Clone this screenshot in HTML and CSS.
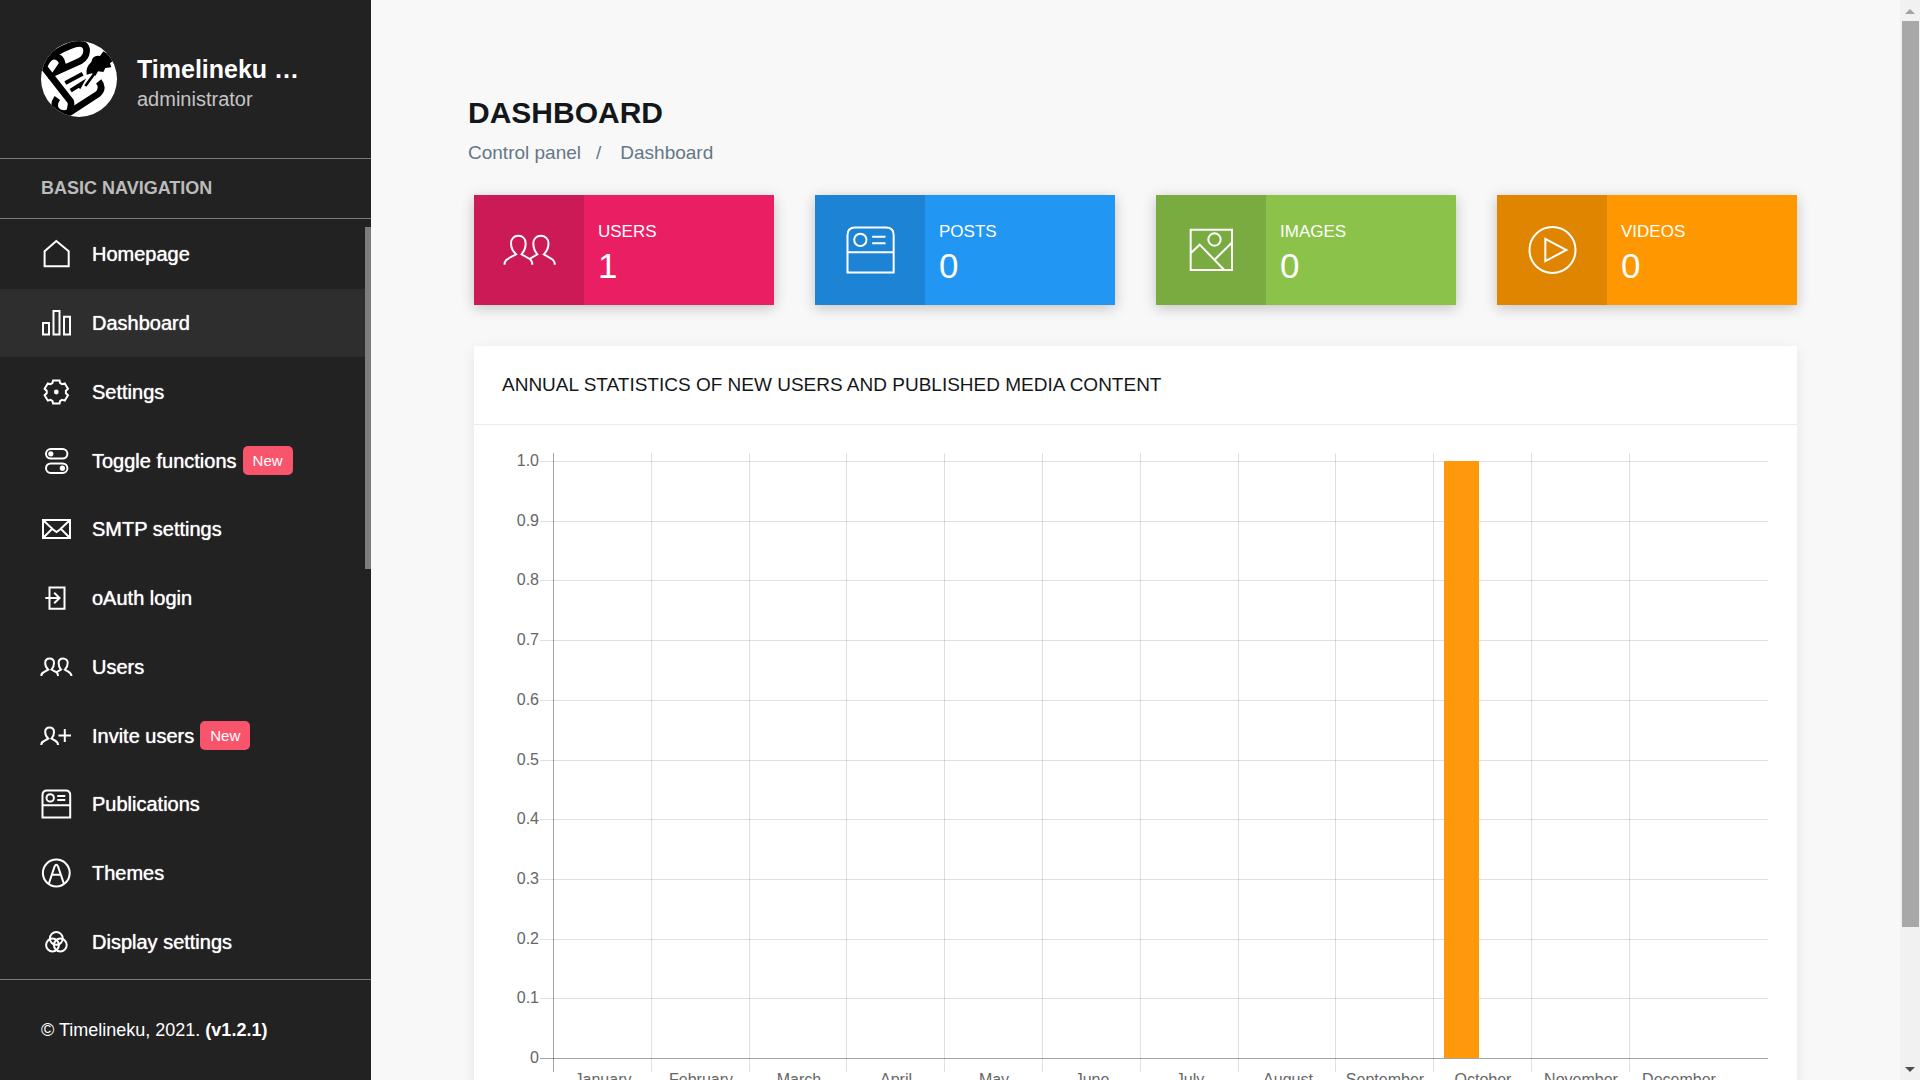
FILE: index.html
```
<!DOCTYPE html>
<html lang="en">
<head>
    <meta charset="UTF-8">
    <meta name="viewport" content="width=device-width, initial-scale=1.0">
    <title>Dashboard</title>
    <link rel="stylesheet" href="styles.css">
</head>
<body>
    <!-- Icon set -->
    <svg class="sprite" aria-hidden="true">
        <symbol id="home" viewBox="0 0 30 30"><path d="M3.6 12.3L15.3 2L27.7 12.3V27.3H3.6Z"/></symbol>
        <symbol id="bars" viewBox="0 0 30 30"><path d="M2 15H8V26.5H2ZM12.5 3H18.5V26.5H12.5ZM23 8.7H29V26.5H23Z"/></symbol>
        <symbol id="gear" viewBox="0 0 30 30">
            <path transform="translate(15.3 15)" d="M-3.2-11.6H3.2L3.9-9L5.8-7.8L8.5-8.6L11.7-3.2L9.6-1.2V1.2L11.7 3.2L8.5 8.6L5.8 7.8L3.9 9L3.2 11.6H-3.2L-3.9 9L-5.8 7.8L-8.5 8.6L-11.7 3.2L-9.6 1.2V-1.2L-11.7-3.2L-8.5-8.6L-5.8-7.8L-3.9-9Z"/>
            <circle class="dot" cx="15.3" cy="15" r="2.4"/>
        </symbol>
        <symbol id="toggle" viewBox="0 0 30 30">
            <rect x="5" y="3" width="21.4" height="9.6" rx="4.8"/><circle class="dot" cx="9.8" cy="7.8" r="2.6"/>
            <rect x="5" y="17.4" width="21.4" height="9.6" rx="4.8"/><circle class="dot" cx="21.4" cy="22.2" r="2.6"/>
        </symbol>
        <symbol id="mail" viewBox="0 0 30 30"><path d="M2 6H29V24H2ZM2 6L12 15.5L15.5 18L19 15.5L29 6M2 24L12 14M29 24L19 14"/></symbol>
        <symbol id="login" viewBox="0 0 30 30"><path d="M8.5 13V4.5H23.5V25.7H8.5V17M4.3 15H18.6M13.2 9.8L18.5 15L13.2 20.2M8.5 13V17"/></symbol>
        <symbol id="users" viewBox="0 0 30 30">
            <path d="M.3 23.9C.3 20.6 2.5 20.3 7.2 17.6C5.5 16 4.2 13.5 4.2 11C4.2 8.3 6 6.5 8.6 6.5S13 8.3 13 11C13 13.5 12 16 10.5 17.6L15.5 20.4C16.7 21.2 17 22 17 23.9"/>
            <path d="M15.3 20.4L20 17.6C18.5 16 17.6 13.5 17.6 11C17.6 8.3 19.5 6.5 22.1 6.5S26.7 8.3 26.7 11C26.7 13.5 25.5 16 23.9 17.6C28.3 20.3 30.5 20.6 30.5 23.9"/>
        </symbol>
        <symbol id="invite" viewBox="0 0 30 30">
            <path d="M.3 23.9C.3 20.6 2.5 20.3 7.2 17.6C5.5 16 4.2 13.5 4.2 11C4.2 8.3 6 6.5 8.6 6.5S13 8.3 13 11C13 13.5 12 16 10.5 17.6C15 20.3 17 20.6 17 23.9"/>
            <path d="M17.5 14.5H30M23.8 8V21"/>
        </symbol>
        <symbol id="post" viewBox="0 0 30 30">
            <path d="M1.5 28.5V6Q1.5 1.5 6 1.5H24.7Q29.2 1.5 29.2 6V28.5ZM1.5 16.3H29.2M16.3 7H24.3M16.3 11H24.3"/>
            <circle cx="9.2" cy="8.9" r="3.7"/>
        </symbol>
        <symbol id="theme" viewBox="0 0 30 30">
            <circle cx="15.3" cy="15" r="13.4"/>
            <path d="M7.7 26L13.6 8.5Q15.3 5 17 8.5L23 26M11.2 16.8H19.4"/>
        </symbol>
        <symbol id="rgb" viewBox="0 0 30 30"><circle cx="15.3" cy="11.4" r="6.4"/><circle cx="11.5" cy="18" r="6.4"/><circle cx="19.3" cy="18" r="6.4"/></symbol>
        <symbol id="image" viewBox="0 0 30 30">
            <path d="M2.8 2.8H27.6V27H2.8ZM2.8 17L8.2 11.8L23 27M17.1 20.9L27.6 10.5"/>
            <circle cx="17.1" cy="8.7" r="3.7"/>
        </symbol>
        <symbol id="play" viewBox="0 0 30 30"><circle cx="15.3" cy="15" r="13.8"/><path d="M11 8.3V21.7L23.6 15Z"/></symbol>
    </svg>

    <aside class="sidebar">
        <div class="profile">
            <svg class="avatar" viewBox="123 123 228 228" role="img" aria-label="Timelineku">
                <path class="scroll" d="M146 172Q186 144 225 132Q258 124 260 152Q259 172 242 182L172 214L187 192Q184 170 160 168Q140 174 132 202L212 304Q216 318 206 340"/>
                <path class="scroll" d="M296 244Q312 264 294 282L208 338Q178 346 167 328Q159 312 172 294"/>
                <path class="line" d="M196 249L248 221M212 272L242 253L236 264"/>
                <path class="quill" d="M256 258L306 190"/>
                <path class="feather" d="M260 224Q256 202 274 186Q278 164 300 168L310 154L320 160L334 158L332 174L342 180L330 190L334 202L316 204L310 216L294 214L286 228L276 220Z"/>
            </svg>
            <div class="profile-text">
                <div class="profile-name">Timelineku …</div>
                <div class="profile-role">administrator</div>
            </div>
        </div>
        <div class="nav-title">BASIC NAVIGATION</div>
        <nav class="nav">
            <a href="#" class="nav-item"><svg class="icon"><use href="#home"/></svg><span>Homepage</span></a>
            <a href="#" class="nav-item active"><svg class="icon"><use href="#bars"/></svg><span>Dashboard</span></a>
            <a href="#" class="nav-item"><svg class="icon"><use href="#gear"/></svg><span>Settings</span></a>
            <a href="#" class="nav-item"><svg class="icon"><use href="#toggle"/></svg><span>Toggle functions</span><span class="badge">New</span></a>
            <a href="#" class="nav-item"><svg class="icon"><use href="#mail"/></svg><span>SMTP settings</span></a>
            <a href="#" class="nav-item"><svg class="icon"><use href="#login"/></svg><span>oAuth login</span></a>
            <a href="#" class="nav-item"><svg class="icon"><use href="#users"/></svg><span>Users</span></a>
            <a href="#" class="nav-item"><svg class="icon"><use href="#invite"/></svg><span>Invite users</span><span class="badge">New</span></a>
            <a href="#" class="nav-item"><svg class="icon"><use href="#post"/></svg><span>Publications</span></a>
            <a href="#" class="nav-item"><svg class="icon"><use href="#theme"/></svg><span>Themes</span></a>
            <a href="#" class="nav-item"><svg class="icon"><use href="#rgb"/></svg><span>Display settings</span></a>
            <div class="nav-thumb"></div>
        </nav>
        <div class="legal">© Timelineku, 2021. <b>(v1.2.1)</b></div>
    </aside>

    <main class="content">
        <div class="page-header">
            <h1>DASHBOARD</h1>
            <div class="breadcrumb"><a href="#">Control panel</a><span>/</span><a href="#">Dashboard</a></div>
        </div>

        <div class="cards">
            <div class="card pink">
                <div class="card-icon"><svg class="icon"><use href="#users"/></svg></div>
                <div class="card-text"><div class="card-label">USERS</div><div class="card-number">1</div></div>
            </div>
            <div class="card blue">
                <div class="card-icon"><svg class="icon"><use href="#post"/></svg></div>
                <div class="card-text"><div class="card-label">POSTS</div><div class="card-number">0</div></div>
            </div>
            <div class="card green">
                <div class="card-icon"><svg class="icon"><use href="#image"/></svg></div>
                <div class="card-text"><div class="card-label">IMAGES</div><div class="card-number">0</div></div>
            </div>
            <div class="card orange">
                <div class="card-icon"><svg class="icon"><use href="#play"/></svg></div>
                <div class="card-text"><div class="card-label">VIDEOS</div><div class="card-number">0</div></div>
            </div>
        </div>

        <section class="panel">
            <h2>ANNUAL STATISTICS OF NEW USERS AND PUBLISHED MEDIA CONTENT</h2>
            <svg class="chart" id="chart" viewBox="0 0 1323 700"></svg>
        </section>
    </main>

    <div class="scrollbar">
        <svg class="arrow up" viewBox="0 0 10 5"><path d="M0 5L5 0L10 5Z"/></svg>
        <div class="thumb"></div>
        <svg class="arrow" viewBox="0 0 10 5"><path d="M0 0L5 5L10 0Z"/></svg>
    </div>

    <script>
        const months = ['January', 'February', 'March', 'April', 'May', 'June', 'July',
            'August', 'September', 'October', 'November', 'December'];
        const videos = [0, 0, 0, 0, 0, 0, 0, 0, 0, 1, 0, 0];
        const left = 79, right = 1294, top1 = 37, bottom = 634, step = 97.8;
        let out = '';

        // horizontal grid and value labels
        for (let i = 0; i <= 10; i++) {
            const y = Math.round(bottom - (bottom - top1) * i / 10);
            const label = i === 0 ? '0' : (i / 10).toFixed(1);
            out += `<rect class="${i === 0 ? 'axis' : 'grid'}" x="66" y="${y - 1}" width="${right - 66}" height="1"/>`;
            out += `<text x="65" y="${y + 4}" text-anchor="end">${label}</text>`;
        }

        // vertical grid, month labels and bars
        months.forEach((month, i) => {
            const x = Math.round(left + step * i);
            out += `<rect class="${i === 0 ? 'axis' : 'grid'}" x="${x}" y="28" width="1" height="619"/>`;
            out += `<text x="${Math.round(x + step / 2) + 1}" y="660" text-anchor="middle">${month}</text>`;
            if (videos[i]) {
                const h = (bottom - top1) * videos[i];
                out += `<rect class="bar" x="${x + 11}" y="${bottom - 1 - h}" width="35" height="${h}"/>`;
            }
        });

        document.getElementById('chart').innerHTML = out;
    </script>
</body>
</html>
```
FILE: styles.css
```
* {
    box-sizing: border-box;
}

body {
    margin: 0;
    height: 100vh;
    display: flex;
    overflow: hidden;
    background-color: #f8f8f8;
    font-family: "Liberation Sans", Arial, sans-serif;
}

a {
    color: inherit;
    text-decoration: none;
}

.sprite {
    position: absolute;
    width: 0;
    height: 0;
}

.icon {
    width: 30px;
    height: 30px;
    flex: none;
    overflow: visible;
    fill: none;
    stroke: #fff;
    stroke-width: 2px;
}

symbol {
    overflow: visible;
}

symbol path, symbol rect, symbol circle {
    vector-effect: non-scaling-stroke;
}

symbol .dot {
    fill: #fff;
    stroke: none;
}

/* Sidebar */
.sidebar {
    width: 371px;
    flex: none;
    display: flex;
    flex-direction: column;
    background-color: #222;
    color: #fff;
}

.profile {
    display: flex;
    align-items: center;
    gap: 20px;
    height: 159px;
    padding: 0 41px;
    border-bottom: 1px solid #7a7a7a;
}

.avatar {
    width: 76px;
    height: 76px;
    border-radius: 50%;
    background-color: #fff;
    fill: none;
    stroke: #000;
}

.scroll {
    stroke-width: 20px;
}

.line {
    stroke-width: 12px;
}

.quill {
    stroke-width: 8px;
}

.feather {
    fill: #000;
    stroke: none;
}

.profile-text {
    padding-top: 8px;
}

.profile-name {
    font-size: 25px;
    font-weight: bold;
    line-height: 32px;
}

.profile-role {
    font-size: 20px;
    line-height: 28px;
    color: #c4c4c4;
}

.nav-title {
    height: 60px;
    padding: 0 41px;
    line-height: 58px;
    font-size: 18px;
    font-weight: bold;
    color: #bbb;
    border-bottom: 1px solid #7a7a7a;
}

.nav {
    position: relative;
    flex: 1;
    display: flex;
    flex-direction: column;
    padding: 1px 0 3px;
}

.nav-item {
    flex: 1;
    display: flex;
    align-items: center;
    padding-left: 41px;
    font-size: 20px;
    line-height: 22px;
    text-shadow: 0 0 1px #fff;
}

.nav-item .icon {
    margin-right: 21px;
}

.nav-item.active {
    background-color: #2e2e2e;
}

.badge {
    margin-left: 6px;
    padding: 0 10px;
    border-radius: 5px;
    background-color: #f8546b;
    font-size: 15px;
    line-height: 29px;
    text-shadow: none;
}

.nav-thumb {
    position: absolute;
    top: 8px;
    right: 0;
    width: 6px;
    height: 45%;
    background-color: #7d7d7d;
}

.legal {
    height: 101px;
    padding: 0 41px;
    line-height: 100px;
    font-size: 18px;
    border-top: 1px solid #7a7a7a;
}

/* Content */
.content {
    flex: 1;
    min-width: 0;
    padding: 95px 103px 0;
}

.page-header {
    margin-left: -6px;
}

h1 {
    margin: 0;
    font-size: 30px;
    line-height: 36px;
    color: #14171a;
}

.breadcrumb {
    display: flex;
    gap: 15px;
    margin-top: 10px;
    font-size: 19px;
    line-height: 24px;
    color: #657786;
}

.breadcrumb a:last-child {
    margin-left: 4px;
}

.cards {
    display: grid;
    grid-template-columns: repeat(4, 1fr);
    gap: 41px;
    margin-top: 30px;
}

.card {
    display: flex;
    height: 110px;
    color: #fff;
    box-shadow: 0 3px 13px rgba(0, 0, 0, 0.22);
}

.card-icon {
    width: 110px;
    display: flex;
    align-items: center;
    justify-content: center;
    background-color: rgba(0, 0, 0, 0.12);
}

.card-icon .icon {
    width: 50px;
    height: 50px;
}

.card-text {
    padding: 26px 14px 0;
}

.card-label {
    font-size: 17px;
    line-height: 22px;
}

.card-number {
    font-size: 35px;
    line-height: 46px;
}

.pink {
    background-color: #e91e63;
}

.blue {
    background-color: #2196f3;
}

.green {
    background-color: #8bc34a;
}

.orange {
    background-color: #ff9800;
}

.panel {
    margin-top: 41px;
    background-color: #fff;
    box-shadow: 0 3px 13px rgba(0, 0, 0, 0.08);
}

.panel h2 {
    margin: 0;
    height: 79px;
    padding: 0 28px;
    border-bottom: 1px solid #e6ecf0;
    font-size: 19px;
    font-weight: normal;
    line-height: 78px;
    color: #14171a;
}

.chart {
    display: block;
    width: 100%;
}

.chart text {
    font-size: 16px;
    fill: #666;
}

.grid {
    fill: rgba(0, 0, 0, 0.12);
}

.axis {
    fill: rgba(0, 0, 0, 0.36);
}

.bar {
    fill: #ff980a;
}

/* Page scrollbar */
.scrollbar {
    width: 20px;
    flex: none;
    display: flex;
    flex-direction: column;
    align-items: center;
    padding: 9px 1px 8px;
    background-color: #f1f1f1;
}

.thumb {
    width: 17px;
    height: 906px;
    margin: 7px 0 auto;
    background-color: #a8a8a8;
}

.arrow {
    width: 10px;
    height: 5px;
    fill: #505050;
}

.arrow.up {
    fill: #a3a3a3;
}
```
